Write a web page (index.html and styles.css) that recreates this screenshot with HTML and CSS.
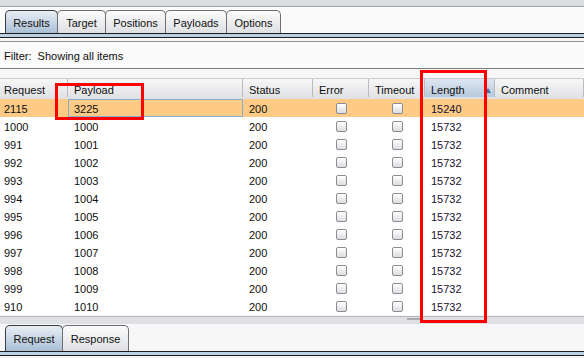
FILE: index.html
```html
<!DOCTYPE html>
<html lang="en">
<head>
    <meta charset="UTF-8">
    <title>Intruder Results</title>
    <link rel="stylesheet" href="styles.css">
</head>
<body>
    <div class="window">
        <div class="top-strip"></div>
        <div class="tabs">
            <div class="tab active">Results</div>
            <div class="tab">Target</div>
            <div class="tab">Positions</div>
            <div class="tab">Payloads</div>
            <div class="tab">Options</div>
        </div>
        <div class="tab-band"></div>

        <div class="filter">Filter:&nbsp; Showing all items</div>

        <div class="table">
            <div class="row header">
                <div class="cell">Request</div>
                <div class="cell">Payload</div>
                <div class="cell">Status</div>
                <div class="cell">Error</div>
                <div class="cell">Timeout</div>
                <div class="cell sorted">Length<span class="sort-arrow"></span></div>
                <div class="cell">Comment</div>
            </div>
            <div id="rows"></div>
        </div>

        <div class="hscroll"><span class="thumb"></span></div>

        <div class="tabs bottom">
            <div class="tab active">Request</div>
            <div class="tab">Response</div>
        </div>
        <div class="tab-band"></div>

        <div class="mark mark-payload"></div>
        <div class="mark mark-length"></div>
    </div>

    <script>
        const results = [
            ['2115', '3225', '200', '15240'],
            ['1000', '1000', '200', '15732'],
            ['991', '1001', '200', '15732'],
            ['992', '1002', '200', '15732'],
            ['993', '1003', '200', '15732'],
            ['994', '1004', '200', '15732'],
            ['995', '1005', '200', '15732'],
            ['996', '1006', '200', '15732'],
            ['997', '1007', '200', '15732'],
            ['998', '1008', '200', '15732'],
            ['999', '1009', '200', '15732'],
            ['910', '1010', '200', '15732']
        ];

        const rows = document.getElementById('rows');
        results.forEach((r, i) => {
            const row = document.createElement('div');
            row.className = 'row' + (i === 0 ? ' selected' : '');
            row.innerHTML =
                `<div class="cell">${r[0]}</div>` +
                `<div class="cell${i === 0 ? ' focus' : ''}">${r[1]}</div>` +
                `<div class="cell">${r[2]}</div>` +
                `<div class="cell center"><span class="check"></span></div>` +
                `<div class="cell center"><span class="check"></span></div>` +
                `<div class="cell len">${r[3]}</div>` +
                `<div class="cell"></div>`;
            rows.appendChild(row);
        });
    </script>
</body>
</html>
```

FILE: styles.css
```css
* {
    margin: 0;
    padding: 0;
    box-sizing: border-box;
}

body {
    font-family: "Liberation Sans", Arial, sans-serif;
    font-size: 11px;
    color: #0e0e0e;
    background: #f7f7f7;
}

.window {
    position: relative;
    width: 584px;
    height: 358px;
    overflow: hidden;
}

.top-strip {
    height: 7px;
    background: #dcdde0;
    border-bottom: 1px solid #a4a5a9;
}

.tabs {
    display: flex;
    padding: 3px 0 0 5px;
    border-bottom: 1px solid #1e1e1e;
    background: #fafafa;
}

.tab {
    height: 23px;
    padding: 1px 0 0;
    display: flex;
    align-items: center;
    justify-content: center;
    font-size: 11px;
    color: #111;
    border: 1px solid #6d6f73;
    border-bottom: none;
    border-radius: 5px 5px 0 0;
    background: linear-gradient(#fbfbfb, #dfe0e3);
    margin-right: -1px;
}

.tab.active {
    background: linear-gradient(#e8eef5, #a9bfd5);
    border-color: #3a3c40;
}

.tabs .tab:nth-child(1) { width: 53px; }
.tabs .tab:nth-child(2) { width: 49px; }
.tabs .tab:nth-child(3) { width: 61px; }
.tabs .tab:nth-child(4) { width: 62px; }
.tabs .tab:nth-child(5) { width: 55px; }

.tab-band {
    height: 4px;
    background: #bcd0e4;
    border-bottom: 1px solid #1e1e1e;
}

.filter {
    margin-top: 3px;
    height: 28px;
    padding: 1px 0 0 4px;
    display: flex;
    align-items: center;
    background: #fafafa;
    border-top: 1px solid #8e8e8e;
    border-bottom: 1px solid #7a7a7a;
}

.table {
    margin-top: 9px;
    background: #fff;
}

.row {
    display: grid;
    grid-template-columns: 68px 175px 70px 56px 56px 70px 1fr;
    height: 18px;
}

.row.header {
    height: 21px;
    border-top: 1px solid #c9cacd;
    background: linear-gradient(#f7f7f8, #dfe0e3);
}

.header .cell {
    border-right: 1px solid #b9bbbf;
    line-height: 20px;
    padding-top: 1px;
}

.header .cell.sorted {
    position: relative;
    background: linear-gradient(#dde7f1, #b6c9dc);
}

.sort-arrow {
    position: absolute;
    right: 3px;
    top: 9px;
    border-left: 3px solid transparent;
    border-right: 3px solid transparent;
    border-bottom: 5px solid #3b73b5;
}

.cell {
    padding: 1px 0 0 6px;
    height: 18px;
    line-height: 19px;
    white-space: nowrap;
    overflow: hidden;
}

.row .cell:first-child {
    padding-left: 4px;
}

.cell.center {
    display: flex;
    align-items: center;
    justify-content: center;
    padding: 0;
}

.cell.len {
    color: #1a1030;
}

.row.selected {
    background: #fecb86;
}

.cell.focus {
    border: 1px solid #8aaed2;
    padding: 1px 0 0 5px;
    line-height: 17px;
}

.check {
    width: 11px;
    height: 11px;
    border: 1px solid #8b8d91;
    border-radius: 2px;
    background: linear-gradient(#ffffff, #dcdde0);
}

.hscroll {
    position: relative;
    height: 8px;
    margin-top: 1px;
    border-top: 1px solid #b4b5b8;
    background: #dfe0e3;
}

.thumb {
    position: absolute;
    left: 407px;
    top: 1px;
    width: 13px;
    height: 2px;
    background: #a9abaf;
}

.tabs.bottom {
    padding-top: 1px;
    background: #f7f7f7;
}

.tabs.bottom .tab {
    height: 26px;
}

.tabs.bottom .tab:nth-child(1) { width: 58px; }
.tabs.bottom .tab:nth-child(2) { width: 67px; }

.mark {
    position: absolute;
    border: 3px solid #ff0000;
}

.mark-payload {
    left: 55px;
    top: 83px;
    width: 89px;
    height: 37px;
}

.mark-length {
    left: 420px;
    top: 70px;
    width: 67px;
    height: 253px;
}
```
